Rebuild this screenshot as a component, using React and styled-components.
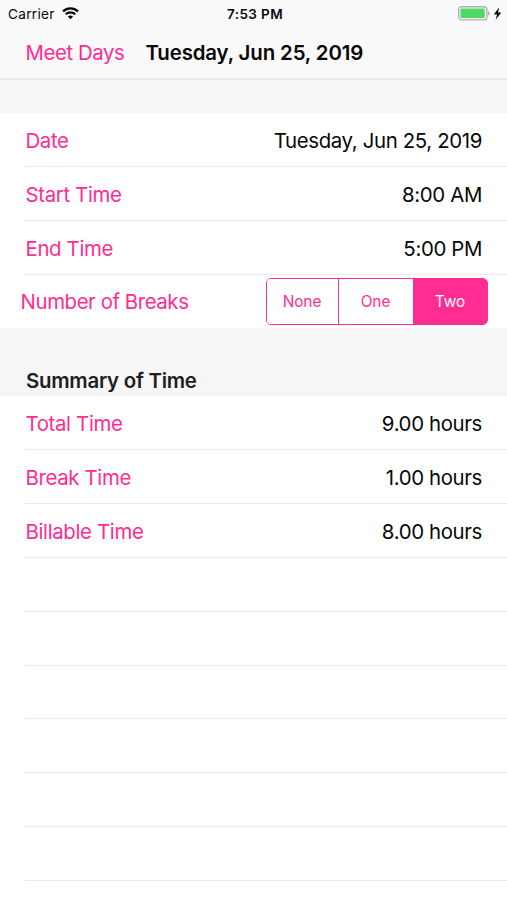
import React, { useState } from "react";
import styled, { createGlobalStyle } from "styled-components";

const GlobalStyle = createGlobalStyle`
  * {
    box-sizing: border-box;
  }

  body {
    margin: 0;
    background-color: white;
    color: #080808;
    font-family: Inter, "Liberation Sans", sans-serif;
  }
`;

const Screen = styled.div`
  width: 100%;
  height: 900px;
  overflow: hidden;
  background-color: white;
`;

const Header = styled.header`
  height: 80px;
  background-color: #f9f9f9;
  border-bottom: 2px solid #e9e9e9;
`;

const StatusBar = styled.div`
  display: grid;
  grid-template-columns: 1fr auto 1fr;
  align-items: center;
  height: 27px;
  padding: 0 5px 0 8px;
  font-size: 13.6px;
`;

const Carrier = styled.div`
  display: flex;
  align-items: center;
  gap: 7px;
  letter-spacing: 0.3px;
`;

const Clock = styled.div`
  font-weight: 600;
  font-size: 13.5px;
  letter-spacing: 0.4px;
  padding-top: 1px;
`;

const Power = styled.div`
  display: flex;
  align-items: center;
  justify-content: flex-end;
  gap: 3px;
`;

const NavBar = styled.nav`
  display: flex;
  align-items: center;
  height: 51px;
  padding-left: 25.5px;
`;

const BackButton = styled.button`
  width: 120px;
  padding: 0;
  border: none;
  background: none;
  color: #ff2d92;
  font: inherit;
  font-size: 20.4px;
  letter-spacing: -0.42px;
  text-align: left;
`;

const Title = styled.h1`
  margin: 0;
  font-size: 20.4px;
  font-weight: 600;
  letter-spacing: -0.12px;
`;

const SectionHeader = styled.div`
  display: flex;
  align-items: flex-end;
  height: ${(props) => props.$height}px;
  padding: 0 26px 3px;
  background-color: #f6f6f6;
`;

const SectionTitle = styled.h2`
  margin: 0;
  color: #1f1f21;
  font-size: 20.4px;
  font-weight: 600;
  line-height: 25px;
  letter-spacing: -0.25px;
`;

const Row = styled.div`
  display: flex;
  align-items: center;
  justify-content: space-between;
  height: 53.85px;
  margin-left: ${(props) => (props.$wide ? 20.6 : 25)}px;
  padding-top: ${(props) => (props.$wide ? 0 : 2)}px;
  padding-right: ${(props) => (props.$wide ? 19 : 25)}px;
  border-bottom: ${(props) => (props.$wide ? "none" : "1px solid #ebebec")};
`;

const Label = styled.span`
  padding-left: ${(props) => (props.$tight ? 0 : 0.5)}px;
  color: #ff2d92;
  font-size: 20.4px;
  letter-spacing: ${(props) => (props.$tight ? -0.43 : -0.35)}px;
`;

const Value = styled.span`
  font-size: 20.4px;
  letter-spacing: -0.36px;
`;

const Segments = styled.div`
  display: grid;
  grid-template-columns: 71px 75px 1fr;
  width: 222px;
  height: 47px;
  border: 1px solid #ff2d92;
  border-radius: 5px;
  overflow: hidden;
`;

const Segment = styled.button`
  padding: 1px 1px 0 0;
  border: none;
  border-left: ${(props) => (props.$first ? "none" : "1px solid #ff2d92")};
  background-color: ${(props) => (props.$active ? "#ff2d92" : "white")};
  color: ${(props) => (props.$active ? "white" : "#ff2d92")};
  font: inherit;
  font-size: 15.4px;
  letter-spacing: -0.05px;
`;

function WifiIcon() {
  return (
    <svg width="17" height="13" viewBox="0 0 17 13" fill="none">
      <path d="M1 4.4a10.8 10.8 0 0 1 15 0" stroke="#080808" strokeWidth="2.4" />
      <path d="M3.7 7.3a6.9 6.9 0 0 1 9.6 0" stroke="#080808" strokeWidth="2.1" />
      <path d="M5.9 9.6a3.8 3.8 0 0 1 5.2 0L8.5 12.3Z" fill="#080808" />
    </svg>
  );
}

function BatteryIcon() {
  return (
    <svg width="32" height="15" viewBox="0 0 32 15">
      <rect x="0.7" y="0.7" width="28.2" height="13.2" rx="3" fill="#f9f9f9" stroke="#b1b1b4" strokeWidth="1.4" />
      <rect x="2.5" y="2.5" width="24.2" height="9.6" rx="1" fill="#4cd964" />
      <path d="M30.2 4.9c1.9.7 1.9 4 0 4.7Z" fill="#a5a5a8" />
    </svg>
  );
}

function BoltIcon() {
  return (
    <svg width="9" height="13" viewBox="0 0 9 13">
      <path d="M6.2 0.3L0.8 7.4h3.3L2.6 12.8 8.3 5.5H5Z" fill="#080808" />
    </svg>
  );
}

const dayRows = [
  { label: "Date", value: "Tuesday, Jun 25, 2019" },
  { label: "Start Time", value: "8:00 AM" },
  { label: "End Time", value: "5:00 PM" },
];

const summaryRows = [
  { label: "Total Time", value: "9.00 hours" },
  { label: "Break Time", value: "1.00 hours" },
  { label: "Billable Time", value: "8.00 hours" },
];

const breakOptions = ["None", "One", "Two"];

function DetailRow(props) {
  return (
    <Row>
      <Label>{props.label}</Label>
      <Value>{props.value}</Value>
    </Row>
  );
}

function App() {
  const [breaks, setBreaks] = useState("Two");

  return (
    <Screen>
      <GlobalStyle />
      <Header>
        <StatusBar>
          <Carrier>
            Carrier
            <WifiIcon />
          </Carrier>
          <Clock>7:53 PM</Clock>
          <Power>
            <BatteryIcon />
            <BoltIcon />
          </Power>
        </StatusBar>
        <NavBar>
          <BackButton>Meet Days</BackButton>
          <Title>Tuesday, Jun 25, 2019</Title>
        </NavBar>
      </Header>
      <SectionHeader $height={33} />
      {dayRows.map((row) => (
        <DetailRow key={row.label} {...row} />
      ))}
      <Row $wide>
        <Label $tight>Number of Breaks</Label>
        <Segments>
          {breakOptions.map((option, index) => (
            <Segment
              key={option}
              $first={index === 0}
              $active={option === breaks}
              onClick={() => setBreaks(option)}
            >
              {option}
            </Segment>
          ))}
        </Segments>
      </Row>
      <SectionHeader $height={68}>
        <SectionTitle>Summary of Time</SectionTitle>
      </SectionHeader>
      {summaryRows.map((row) => (
        <DetailRow key={row.label} {...row} />
      ))}
      {[...Array(7)].map((_, index) => (
        <Row key={index} />
      ))}
    </Screen>
  );
}

export default App;
